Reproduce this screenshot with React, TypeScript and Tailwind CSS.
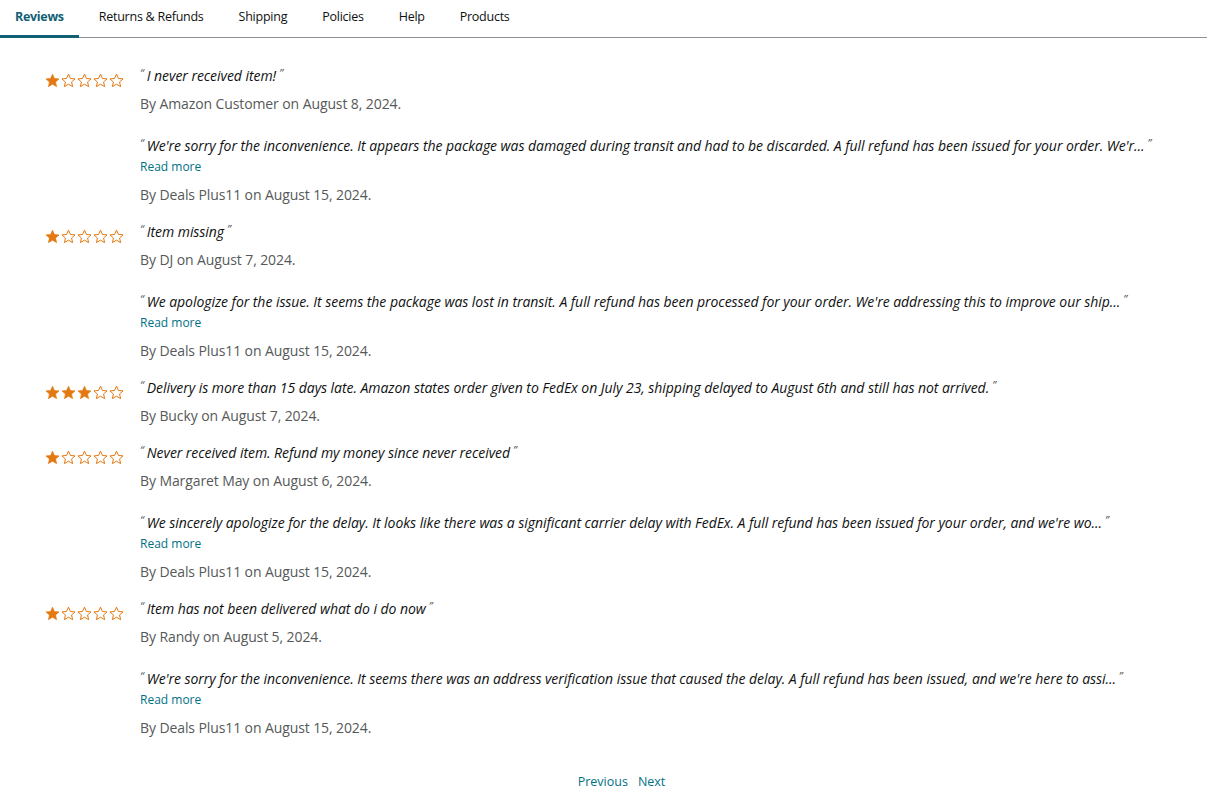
import React from "react";

const STAR = "M12 1.8l3.1 6.9 7.4.7-5.6 5 1.7 7.4L12 17.9l-6.6 3.9 1.7-7.4-5.6-5 7.4-.7z";

function Stars({ n }: { n: number }) {
  return (
    <div className="flex gap-[1px]">
      {[0, 1, 2, 3, 4].map((i) => (
        <svg key={i} width="15" height="15" viewBox="0 0 24 24">
          <path
            d={STAR}
            fill={i < n ? "#e47911" : "none"}
            stroke="#e47911"
            strokeWidth={i < n ? 1 : 1.6}
            strokeLinejoin="round"
          />
        </svg>
      ))}
    </div>
  );
}

function Quote({ text }: { text: string }) {
  return (
    <div className="text-[14px] leading-[20px] italic text-[#0f1111] whitespace-nowrap tracking-[-0.05px]">
      <span className="text-[#565959] text-[11px] align-top relative top-[-3px] mr-[3px]">“</span>
      {text}
      <span className="text-[#565959] text-[11px] align-top relative top-[-3px] ml-[3px]">”</span>
    </div>
  );
}

type Review = {
  stars: number;
  title: string;
  by: string;
  date: string;
  reply?: string;
};

const reviews: Review[] = [
  {
    stars: 1,
    title: "I never received item!",
    by: "Amazon Customer",
    date: "August 8, 2024",
    reply:
      "We're sorry for the inconvenience. It appears the package was damaged during transit and had to be discarded. A full refund has been issued for your order. We'r...",
  },
  {
    stars: 1,
    title: "Item missing",
    by: "DJ",
    date: "August 7, 2024",
    reply:
      "We apologize for the issue. It seems the package was lost in transit. A full refund has been processed for your order. We're addressing this to improve our ship...",
  },
  {
    stars: 3,
    title:
      "Delivery is more than 15 days late. Amazon states order given to FedEx on July 23, shipping delayed to August 6th and still has not arrived.",
    by: "Bucky",
    date: "August 7, 2024",
  },
  {
    stars: 1,
    title: "Never received item. Refund my money since never received",
    by: "Margaret May",
    date: "August 6, 2024",
    reply:
      "We sincerely apologize for the delay. It looks like there was a significant carrier delay with FedEx. A full refund has been issued for your order, and we're wo...",
  },
  {
    stars: 1,
    title: "Item has not been delivered what do i do now",
    by: "Randy",
    date: "August 5, 2024",
    reply:
      "We're sorry for the inconvenience. It seems there was an address verification issue that caused the delay. A full refund has been issued, and we're here to assi...",
  },
];

const tabs = ["Reviews", "Returns & Refunds", "Shipping", "Policies", "Help", "Products"];

export default function App() {
  return (
    <div
      className="w-[1207px] min-h-[803px] bg-white"
      style={{ fontFamily: '"Open Sans", Arial, sans-serif' }}
    >
      <div className="flex gap-[5px] border-b border-[#8d9096] h-[38px]">
        {tabs.map((t, i) => (
          <div
            key={t}
            className={
              i === 0
                ? "px-[15px] h-[38px] pt-[7px] text-[12.5px] leading-[20px] tracking-[-0.3px] font-bold text-[#0f6173] border-b-[3px] border-[#0f6173] mb-[-1px]"
                : "px-[15px] h-[38px] pt-[7px] text-[12.5px] leading-[20px] tracking-[-0.25px] text-[#0f1111]"
            }
          >
            {t}
          </div>
        ))}
      </div>

      <div className="pt-[28px]">
        {reviews.map((r, idx) => (
          <div key={idx} className={idx === 0 ? "flex" : "flex mt-[17px]"}>
            <div className="w-[140px] pl-[45px] pt-[7px] shrink-0">
              <Stars n={r.stars} />
            </div>
            <div className="flex flex-col">
              <Quote text={r.title} />
              <div className="mt-[8px] text-[14px] leading-[20px] text-[#565959] tracking-[-0.1px]">
                By {r.by} on {r.date}.
              </div>
              {r.reply && (
                <>
                  <div className="mt-[22px]">
                    <Quote text={r.reply} />
                  </div>
                  <div className="mt-[3px] text-[12px] leading-[16px] text-[#007185]">
                    Read more
                  </div>
                  <div className="mt-[10px] text-[14px] leading-[20px] text-[#565959] tracking-[-0.1px]">
                    By Deals Plus11 on August 15, 2024.
                  </div>
                </>
              )}
            </div>
          </div>
        ))}
      </div>

      <div className="mt-[34px] pl-[36px] flex justify-center gap-[10px] text-[12.5px] leading-[20px] text-[#007185]">
        <span>Previous</span>
        <span>Next</span>
      </div>
    </div>
  );
}
